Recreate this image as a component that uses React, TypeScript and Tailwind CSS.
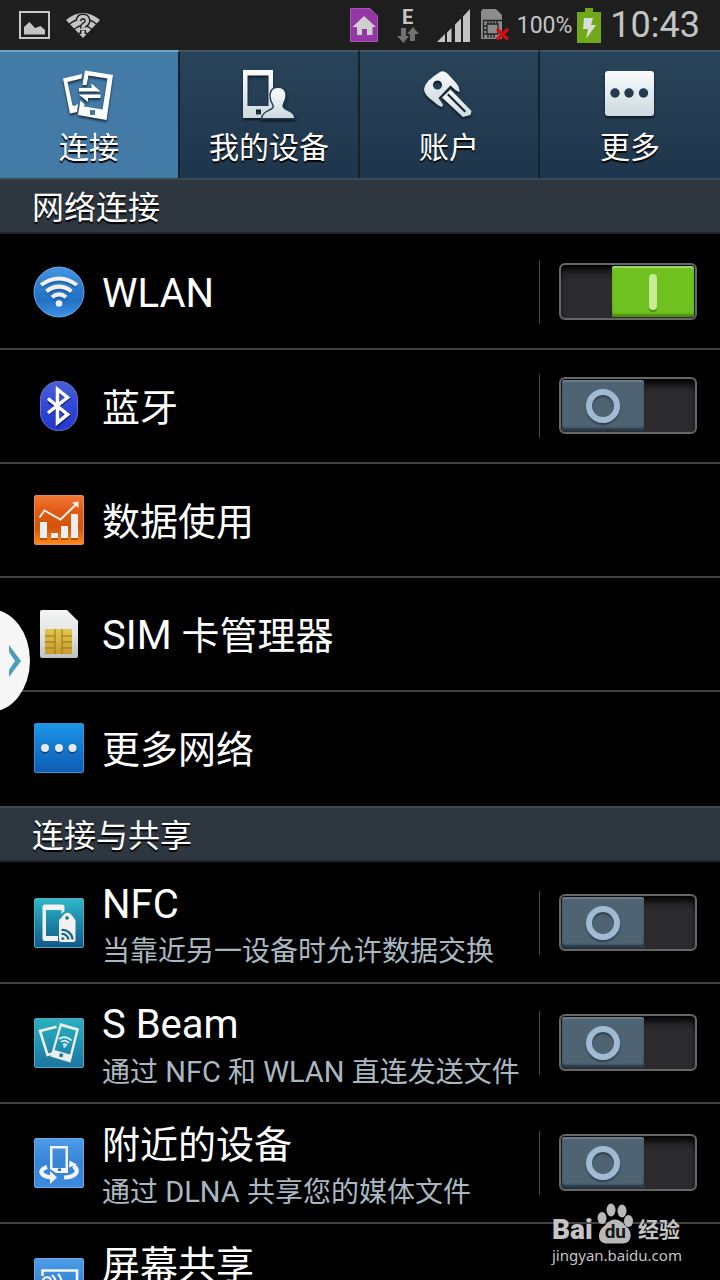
import React, { useId, useState } from "react";

function Runs({ text, latin, cjk }: { text: string; latin: string; cjk: string }) {
  const parts = text.match(/[\u3400-\u9fff]+|[^\u3400-\u9fff]+/g) ?? [];
  return (
    <>
      {parts.map((p, i) => (
        <span key={i} className={/[\u3400-\u9fff]/.test(p) ? cjk : latin}>
          {p}
        </span>
      ))}
    </>
  );
}

function Toggle({ id, initial }: { id: string; initial: boolean }) {
  const [on, setOn] = useState(initial);
  return (
    <div className="flex shrink-0 items-center gap-[19px] pr-[23px]">
      <div className="h-16 w-px bg-[#4a4a4a]" />
      <label
        htmlFor={id}
        className={
          "mb-px flex h-[57px] w-[138px] cursor-pointer rounded-md border-2 border-[#666666] bg-[#2a2a2f] p-px shadow-[inset_0_7px_7px_-2px_#000] " +
          (on ? "justify-end" : "justify-start")
        }
      >
        <input id={id} type="checkbox" role="switch" checked={on} onChange={() => setOn(!on)} className="sr-only" />
        {on ? (
          <span className="flex h-[51px] w-[82px] items-center justify-center rounded-[3px] bg-[#6fc11f] shadow-[inset_0_2px_1px_#a0d868,inset_0_-3px_2px_#4d8e10]">
            <span className="h-9 w-2 rounded-full bg-[#c6ea98] shadow-[0_2px_1px_#4c8a12]" />
          </span>
        ) : (
          <span className="flex h-[51px] w-[82px] items-center justify-center rounded-[3px] bg-[#4f6373] shadow-[inset_0_2px_1px_#6b7e8c,inset_0_-3px_2px_#263845]">
            <span className="size-[34px] rounded-full border-[6px] border-[#a0bad2] shadow-[0_2px_2px_#30404c,inset_0_2px_2px_#30404c]" />
          </span>
        )}
      </label>
    </div>
  );
}

type RowProps = { icon: React.ReactNode; title: string; sub?: string; toggle?: boolean; on?: boolean; tall?: boolean };

function Row({ icon, title, sub, toggle, on = false, tall }: RowProps) {
  const id = useId();
  const titleNode = <Runs text={title} latin="text-[40px]" cjk="text-[38px]" />;
  return (
    <li
      className={
        "flex shrink-0 items-center gap-[17px] border-b-2 border-[#424242] pl-[33px] last:border-transparent " +
        (tall ? "h-[120px]" : "h-[114px]")
      }
    >
      <span className="flex size-[52px] shrink-0 items-center justify-center">{icon}</span>
      <div className={"min-w-0 flex-1 whitespace-nowrap " + (tall ? "self-start pt-[17px]" : "pt-[3px]")}>
        {toggle ? (
          <label htmlFor={id} className="block h-12 leading-[48px]">
            {titleNode}
          </label>
        ) : (
          <a href="#" className="block h-12 leading-[48px]">
            {titleNode}
          </a>
        )}
        {sub && (
          <p className="h-[46px] leading-[46px] text-[#a9b8c0]">
            <Runs text={sub} latin="text-[29px]" cjk="text-[28px]" />
          </p>
        )}
      </div>
      {toggle && <Toggle id={id} initial={on} />}
    </li>
  );
}

function Header({ children }: { children: React.ReactNode }) {
  return (
    <h2 className="mb-0.5 h-14 shrink-0 border-t-2 border-b-2 border-t-[#3c4852] border-b-[#20272d] bg-[#2e3740] pl-8 text-[32px] leading-[56px] font-normal [text-shadow:0_2px_1px_#000]">
      {children}
    </h2>
  );
}

function Grad({ id, stops }: { id: string; stops: string[] }) {
  return (
    <linearGradient id={id} x1="0" y1="0" x2="0" y2="1">
      {stops.map((s, i) => (
        <stop key={i} offset={i / (stops.length - 1)} stopColor={s} />
      ))}
    </linearGradient>
  );
}

function Tile({ id, stops, edge, children }: { id: string; stops: string[]; edge: string; children: React.ReactNode }) {
  return (
    <svg viewBox="0 0 50 50" className="size-[50px]" fill="none">
      <defs>
        <Grad id={id} stops={stops} />
      </defs>
      <rect x=".5" y=".5" width="49" height="49" rx="1.5" fill={`url(#${id})`} stroke={edge} />
      {children}
    </svg>
  );
}

const WlanIcon = () => (
  <svg viewBox="0 0 52 52" className="size-[52px]" fill="none">
    <defs>
      <Grad id="wl" stops={["#4595e4", "#2f80d0", "#2270c4", "#3f93e8"]} />
    </defs>
    <circle cx="26" cy="26" r="25" fill="url(#wl)" stroke="#6aa9e6" />
    <g stroke="#1c5a9c" strokeWidth="4" transform="translate(0 1.5)" opacity=".7">
      <path d="M8 19.5Q26 6.500 44 19.500M13.500 26Q26 16.500 38.500 26M19 31.800Q26 26 33 31.800" />
    </g>
    <g stroke="#f2f2f2" strokeWidth="4">
      <path d="M8 19Q26 6 44 19M13.500 25.300Q26 16 38.500 25.300M19 31.300Q26 25.500 33 31.300" />
    </g>
    <circle cx="26" cy="37.500" r="3.300" fill="#eee" />
  </svg>
);

const BluetoothIcon = () => (
  <svg viewBox="0 0 40 52" className="h-[52px] w-10" fill="none">
    <defs>
      <Grad id="bt" stops={["#4a5fd6", "#3048d4", "#2438cc"]} />
    </defs>
    <rect x="1.500" y="1.500" width="37" height="49" rx="18" fill="url(#bt)" stroke="#6573cf" />
    <path d="M9 20L28.500 34.500L18.500 43.500V9L28.500 17.500L9 32.500" transform="translate(.6 1.300)" stroke="#17237c" strokeWidth="3.500" />
    <path d="M9 18.500L28.500 34.500L18.500 42.500V9.500L28.500 17.500L9 33" stroke="#fff" strokeWidth="3.500" />
  </svg>
);

const DataIcon = () => (
  <Tile id="dt" stops={["#f27836", "#e05a12", "#cf5508", "#ff8a1c"]} edge="#e58a52">
    <g fill="#8a3a06" transform="translate(0 1)" opacity=".6">
      <path d="M6 28h7v16H6zM17 39h7v5h-7zM27 32h7v12h-7zM37 20h7v24h-7z" />
    </g>
    <g fill="#eee">
      <path d="M6 27h7v16H6zM17 38h7v5h-7zM27 31h7v12h-7zM37 19h7v24h-7z" />
      <path d="M44.500 6.500v6.500l-6.500-5.500z" />
    </g>
    <path d="M5.500 22.500L10.500 15.500L26.500 24.500L42.500 9" stroke="#f2f2f2" strokeWidth="2" />
  </Tile>
);

const SimIcon = () => (
  <svg viewBox="0 0 38 48" className="h-12 w-[38px]" fill="none">
    <defs>
      <Grad id="sm" stops={["#f4f5f5", "#e2e3e4", "#bfc1c3"]} />
      <Grad id="chip" stops={["#e2c84c", "#c99b2e"]} />
    </defs>
    <path d="M2 0H27L38 11V46a2 2 0 0 1-2 2H2a2 2 0 0 1-2-2V2a2 2 0 0 1 2-2z" fill="url(#sm)" />
    <rect x="5" y="19" width="27" height="25" fill="url(#chip)" />
    <path d="M15 19v25M22 19v25M5 26h10M5 32h10M5 38h10M22 26h10M22 32h10M22 38h10" stroke="#8f7220" />
  </svg>
);

const MoreNetIcon = () => (
  <Tile id="mn" stops={["#1d97e8", "#1278ce", "#0e5cb0"]} edge="#3292dc">
    <g fill="#0a3c78">
      <circle cx="11" cy="26.500" r="4" />
      <circle cx="25" cy="26.500" r="4" />
      <circle cx="38.500" cy="26.500" r="4" />
    </g>
    <g fill="#eaeaea">
      <circle cx="11" cy="25" r="4" />
      <circle cx="25" cy="25" r="4" />
      <circle cx="38.500" cy="25" r="4" />
    </g>
  </Tile>
);

const NfcIcon = () => (
  <Tile id="nf" stops={["#2fb9c9", "#1c86a8", "#15588c"]} edge="#4fa9bd">
    <path d="M24 43H11a2.500 2.500 0 0 1-2.500-2.500V9A2.500 2.500 0 0 1 11 6.500H28A2.500 2.500 0 0 1 30.500 9V13L27.500 16V12H12V38H24z" fill="#f1f1f1" />
    <path d="M27.500 19.500Q33.500 10 39.500 19.500L41.500 22V42a2 2 0 0 1-2 2H27a2 2 0 0 1-2-2V22z" fill="#f1f1f1" />
    <circle cx="33" cy="20" r="1.800" fill="#166a92" />
    <path d="M27.500 32a10 10 0 0 1 11 9.500M27.500 36a6.500 6.500 0 0 1 7 5.500" stroke="#156292" strokeWidth="2.200" />
    <path d="M27.500 39a3 3 0 0 1 3 2.800h-3z" fill="#156292" />
  </Tile>
);

const BeamIcon = () => (
  <Tile id="sb" stops={["#2bb0c0", "#2294b2", "#1c74a0"]} edge="#4fa9bd">
    <path d="M22.500 8.700L6 13L13.500 37L18.500 35.500" stroke="#eee" strokeWidth="2.600" />
    <path fillRule="evenodd" d="M26 5L45 10.500L36.500 44.500L16.500 38.500zM27.500 8.500L20.500 32L36 36.500L42 12.500z" fill="#eee" />
    <rect x="25.500" y="35.500" width="3.500" height="3.500" fill="#1c74a0" transform="rotate(15 27 37)" />
    <path d="M25 21Q31 16.500 37.500 22.500M27 24Q31 20.700 35 25M29 27Q31 25 33 27.500" stroke="#e8f4f6" strokeWidth="1.600" />
    <circle cx="30.500" cy="28.500" r="1.200" fill="#eee" />
  </Tile>
);

const NearbyIcon = () => (
  <Tile id="nb" stops={["#4c9ce8", "#3684d4", "#3b8ae0"]} edge="#69a9e8">
    <path fillRule="evenodd" d="M16 8H34V35H22L16 31zM18.500 10.500V30H31.500V10.500z" fill="#f4f4f4" />
    <rect x="24" y="30.500" width="3" height="2.500" fill="#2d6cb4" />
    <path d="M13 29C4 32 6 38 17 39.500M30 39.500C42 39 46.500 33 39.500 28" stroke="#f4f4f4" strokeWidth="4.200" />
    <path d="M16 33L23 39.500L16 46zM35 29.500L35.500 22.500L43 26.500z" fill="#f4f4f4" />
  </Tile>
);

const ScreenIcon = () => (
  <Tile id="sc" stops={["#4c9ce8", "#3684d4", "#3b8ae0"]} edge="#69a9e8">
    <path d="M8.500 18V12.500H43V38H30" stroke="#f4f4f4" strokeWidth="2.600" />
    <path d="M9 25a4 4 0 0 1 8-3M18 17q6 5 2 14M24 16q6 6 2 15" stroke="#f4f4f4" strokeWidth="2.200" />
  </Tile>
);

const shadow = "size-[54px] drop-shadow-[0_2px_1px_rgba(0,0,0,0.6)]";

const ConnectTab = () => (
  <svg viewBox="0 0 54 54" className={shadow} fill="#fff">
    <path d="M20 4L1 8.500L8 43.500L15 42L16 34L12.500 36L10.500 35.500L5.500 12L19.500 8.500z" />
    <path d="M23 .5L51 5L44.500 50L16 45L18.500 30.500L22.500 34.500L22 36.500L40.500 39.500L45.500 8.500L26.500 5.500L24.500 15H20.500z" />
    <path d="M17 18H29.500V13.500L38.500 21.500H17zM38.500 24.500V28H26V32L17 24.500z" />
    <rect x="28" y="40" width="5" height="5" fill="#447aa6" />
  </svg>
);

const DeviceTab = () => (
  <svg viewBox="1 0 54 54" className={shadow}>
    <defs>
      <Grad id="tg" stops={["#fafcfd", "#e2eaee", "#cdd9df"]} />
    </defs>
    <path fillRule="evenodd" d="M2 0H32V48H2zM6.500 5.500V36H27.500V5.500zM15 39.500V44.500H20V39.500z" fill="url(#tg)" />
    <path d="M37 18C44 18 45 24 44 28C43 32 41 34 41.500 37C43 41 53 41 53 48H21.500C22 41 32 41 33 37C33 34 30.500 32 30 28C29 23 31 18 37 18z" fill="url(#tg)" stroke="#213b50" strokeWidth="3" paintOrder="stroke" />
  </svg>
);

const KeyTab = () => (
  <svg viewBox="1 0 54 54" className={shadow}>
    <path fillRule="evenodd" d="M19 2Q23 0 27 4L36 14Q39 18 38.500 22L35 20.500L29.500 15.500L17.500 28L22 34.500L21 37Q17 36 12 31Q3 25 3 19Q4 11 19 2zM16.500 10.500a4.500 4.500 0 1 0 .01 0z" fill="url(#tg)" />
    <path fillRule="evenodd" d="M29.500 19.500L50.500 41L49.500 45L42 47L21 27.500zM26 25L43.500 42.500L45 41L27.500 23.500z" fill="url(#tg)" />
  </svg>
);

const MoreTab = () => (
  <svg viewBox="1 0 54 54" className={shadow}>
    <rect x="3" y="1" width="49" height="45" rx="3" fill="url(#tg)" />
    <g fill="#213b50">
      <circle cx="13" cy="23" r="4.700" />
      <circle cx="27" cy="23" r="4.700" />
      <circle cx="41.500" cy="23" r="4.700" />
    </g>
  </svg>
);

function Tab({ icon, label, active }: { icon: React.ReactNode; label: string; active?: boolean }) {
  return (
    <button
      type="button"
      role="tab"
      aria-selected={!!active}
      className={
        "flex flex-col items-center border-t-2 border-r-2 pt-[18px] text-[30px] leading-9 last:border-r-0 [text-shadow:0_2px_1px_#000] " +
        (active
          ? "border-t-[#6fa0c6] border-r-[#12222f] bg-[#447aa6]"
          : "border-t-[#3d566a] border-r-[#12222f] bg-linear-to-b from-[#294359] to-[#1e364c]")
      }
    >
      {icon}
      <span className="mt-1.5">{label}</span>
    </button>
  );
}

function StatusBar() {
  return (
    <div className="flex h-[50px] shrink-0 items-center justify-between bg-[#1e1e1e] pr-5 pl-[19px] text-[#c4c4c4]">
      <div className="flex items-center gap-4">
        <svg viewBox="0 0 31 28" className="h-7 w-[31px]">
          <rect x="1" y="1" width="29" height="26" fill="none" stroke="#c8c8c8" strokeWidth="2" />
          <path d="M5 23.500V16L10.500 11L16 17L21.500 15L26 19V23.500z" fill="#c4c4c4" />
        </svg>
        <svg viewBox="0 0 34 27" className="h-[27px] w-[34px]">
          <path d="M0 8Q17-6 34 8L17 26z" fill="#c4c4c4" />
          <path d="M3 12.500Q17 1 31 12.500M8 17.500Q17 9.500 26 17.500M12.500 22Q17 18 21.500 22" fill="none" stroke="#1e1e1e" strokeWidth="1.500" />
          <path d="M12.500 9Q13 4.500 17 4.500T21.500 8.500Q21.500 11 19 12.500T17 16M17 18v4" fill="none" stroke="#1e1e1e" strokeWidth="6" />
          <path d="M12.500 9Q13 4.500 17 4.500T21.500 8.500Q21.500 11 19 12.500T17 16M17 18.500v3.500" fill="none" stroke="#c4c4c4" strokeWidth="3.200" />
        </svg>
      </div>
      <div className="flex items-center">
        <svg viewBox="0 0 28 34" className="mr-[19px] h-[34px] w-7">
          <path d="M.5.500H20L27.500 8V33.500H.5z" fill="#9536a5" stroke="#a855b4" />
          <path d="M14 8L26 19H22.500V27H17V21H12V27H7V19H2.500z" fill="#cfcfcf" />
        </svg>
        <div className="mr-[18px] flex w-[22px] flex-col items-center">
          <span className="h-[18px] font-[Roboto] text-xl leading-[18px] font-bold">E</span>
          <svg viewBox="0 0 22 17" className="h-[17px] w-[22px]" fill="#717171">
            <path d="M4 2h5v8h3L6.500 17L0 10H4zM13 15V8H10L16 1L22 8H18V15z" />
          </svg>
        </div>
        <svg viewBox="0 0 33 33" className="mr-[11px] size-[33px]" fill="#c4c4c4">
          <path d="M0 33L8 25V33zM10 23.500L14.500 19V33H10zM18 15.500L24 9.500V33H18zM26 7.500L33 0V33H26z" />
        </svg>
        <svg viewBox="0 0 28 32" className="mr-2 h-8 w-7">
          <path d="M2 0H15L21 6V30H0V2z" fill="#8b8b8b" />
          <path d="M2.500 29V11.500H21M6 15H17V25H6zM7 12v3M10 12v3M13 12v3M16 12v3M3 17h3M3 21h3M3 25h3M7 25v4M10 25v4M13 25v4" fill="none" stroke="#242424" strokeWidth="1.300" />
          <path d="M16 20L27 30.500M27 20L16 30.500" stroke="#d01010" strokeWidth="3.500" />
        </svg>
        <span className="mr-[5px] pt-0.5 font-[Roboto] text-[23px]">100%</span>
        <svg viewBox="0 0 24 35" className="mr-[9px] h-[35px] w-6">
          <path d="M8 0H16V4H24V35H0V4H8z" fill="#70a71b" />
          <path d="M7 10H16L14 17H19L9 31L11 21H6z" fill="#dcdcdc" />
        </svg>
        <time className="font-[Roboto] text-[36px] leading-[44px]">10:43</time>
      </div>
    </div>
  );
}

function Watermark() {
  return (
    <div className="pointer-events-none absolute right-[40px] bottom-[15px] w-[128px] text-[#c4c4c4]">
      <div className="flex h-[42px] items-end justify-between font-bold">
        <span className="font-[Roboto] text-[28px] leading-[30px] font-black">Bai</span>
        <span className="relative h-[42px] w-9">
          <svg viewBox="0 0 36 42" className="absolute inset-0 h-[42px] w-9" fill="#b9b9b9">
            <ellipse cx="5" cy="15" rx="4.500" ry="6" />
            <ellipse cx="14" cy="7" rx="4.500" ry="6.500" />
            <ellipse cx="25" cy="8" rx="4.500" ry="6.500" />
            <ellipse cx="31.500" cy="18" rx="4.500" ry="6" />
            <path d="M18 16.500C24 16.500 26 21 31 25C36 31 34 40.500 26 40.500H10C1 40.500 0 31 5 25C10 21 12 16.500 18 16.500z" />
          </svg>
          <span className="absolute inset-x-0 bottom-0.5 text-center font-[Roboto] text-[19px] leading-[22px] text-[#151515]">du</span>
        </span>
        <span className="text-[21px] leading-[30px]">经验</span>
      </div>
      <div className="text-center font-['Noto_Sans'] text-[15px] leading-[20px] whitespace-nowrap">jingyan.baidu.com</div>
    </div>
  );
}

export default function App() {
  return (
    <div className="relative flex h-screen flex-col overflow-hidden bg-black font-[Roboto,'Noto_Sans_CJK_SC',sans-serif] text-white">
      <StatusBar />
      <div role="tablist" className="grid h-32 shrink-0 grid-cols-4">
        <Tab icon={<ConnectTab />} label="连接" active />
        <Tab icon={<DeviceTab />} label="我的设备" />
        <Tab icon={<KeyTab />} label="账户" />
        <Tab icon={<MoreTab />} label="更多" />
      </div>
      <main className="flex min-h-0 flex-1 flex-col overflow-y-auto [scrollbar-width:none]">
        <Header>网络连接</Header>
        <ul className="shrink-0">
          <Row icon={<WlanIcon />} title="WLAN" toggle on />
          <Row icon={<BluetoothIcon />} title="蓝牙" toggle />
          <Row icon={<DataIcon />} title="数据使用" />
          <Row icon={<SimIcon />} title="SIM 卡管理器" />
          <Row icon={<MoreNetIcon />} title="更多网络" />
        </ul>
        <Header>连接与共享</Header>
        <ul className="shrink-0">
          <Row icon={<NfcIcon />} title="NFC" sub="当靠近另一设备时允许数据交换" toggle tall />
          <Row icon={<BeamIcon />} title="S Beam" sub="通过 NFC 和 WLAN 直连发送文件" toggle tall />
          <Row icon={<NearbyIcon />} title="附近的设备" sub="通过 DLNA 共享您的媒体文件" toggle tall />
          <Row icon={<ScreenIcon />} title="屏幕共享" tall />
        </ul>
      </main>
      <button type="button" aria-label="展开" className="absolute top-[609px] -left-[50px] flex h-[103px] w-20 items-center justify-end rounded-[50%] bg-[#f7f7f7] pr-2">
        <svg viewBox="0 0 14 34" className="h-[34px] w-3.5">
          <path d="M1 1L13 17L1 33V26L7 17L1 8z" fill="#4d9dbb" />
        </svg>
      </button>
      <Watermark />
    </div>
  );
}
